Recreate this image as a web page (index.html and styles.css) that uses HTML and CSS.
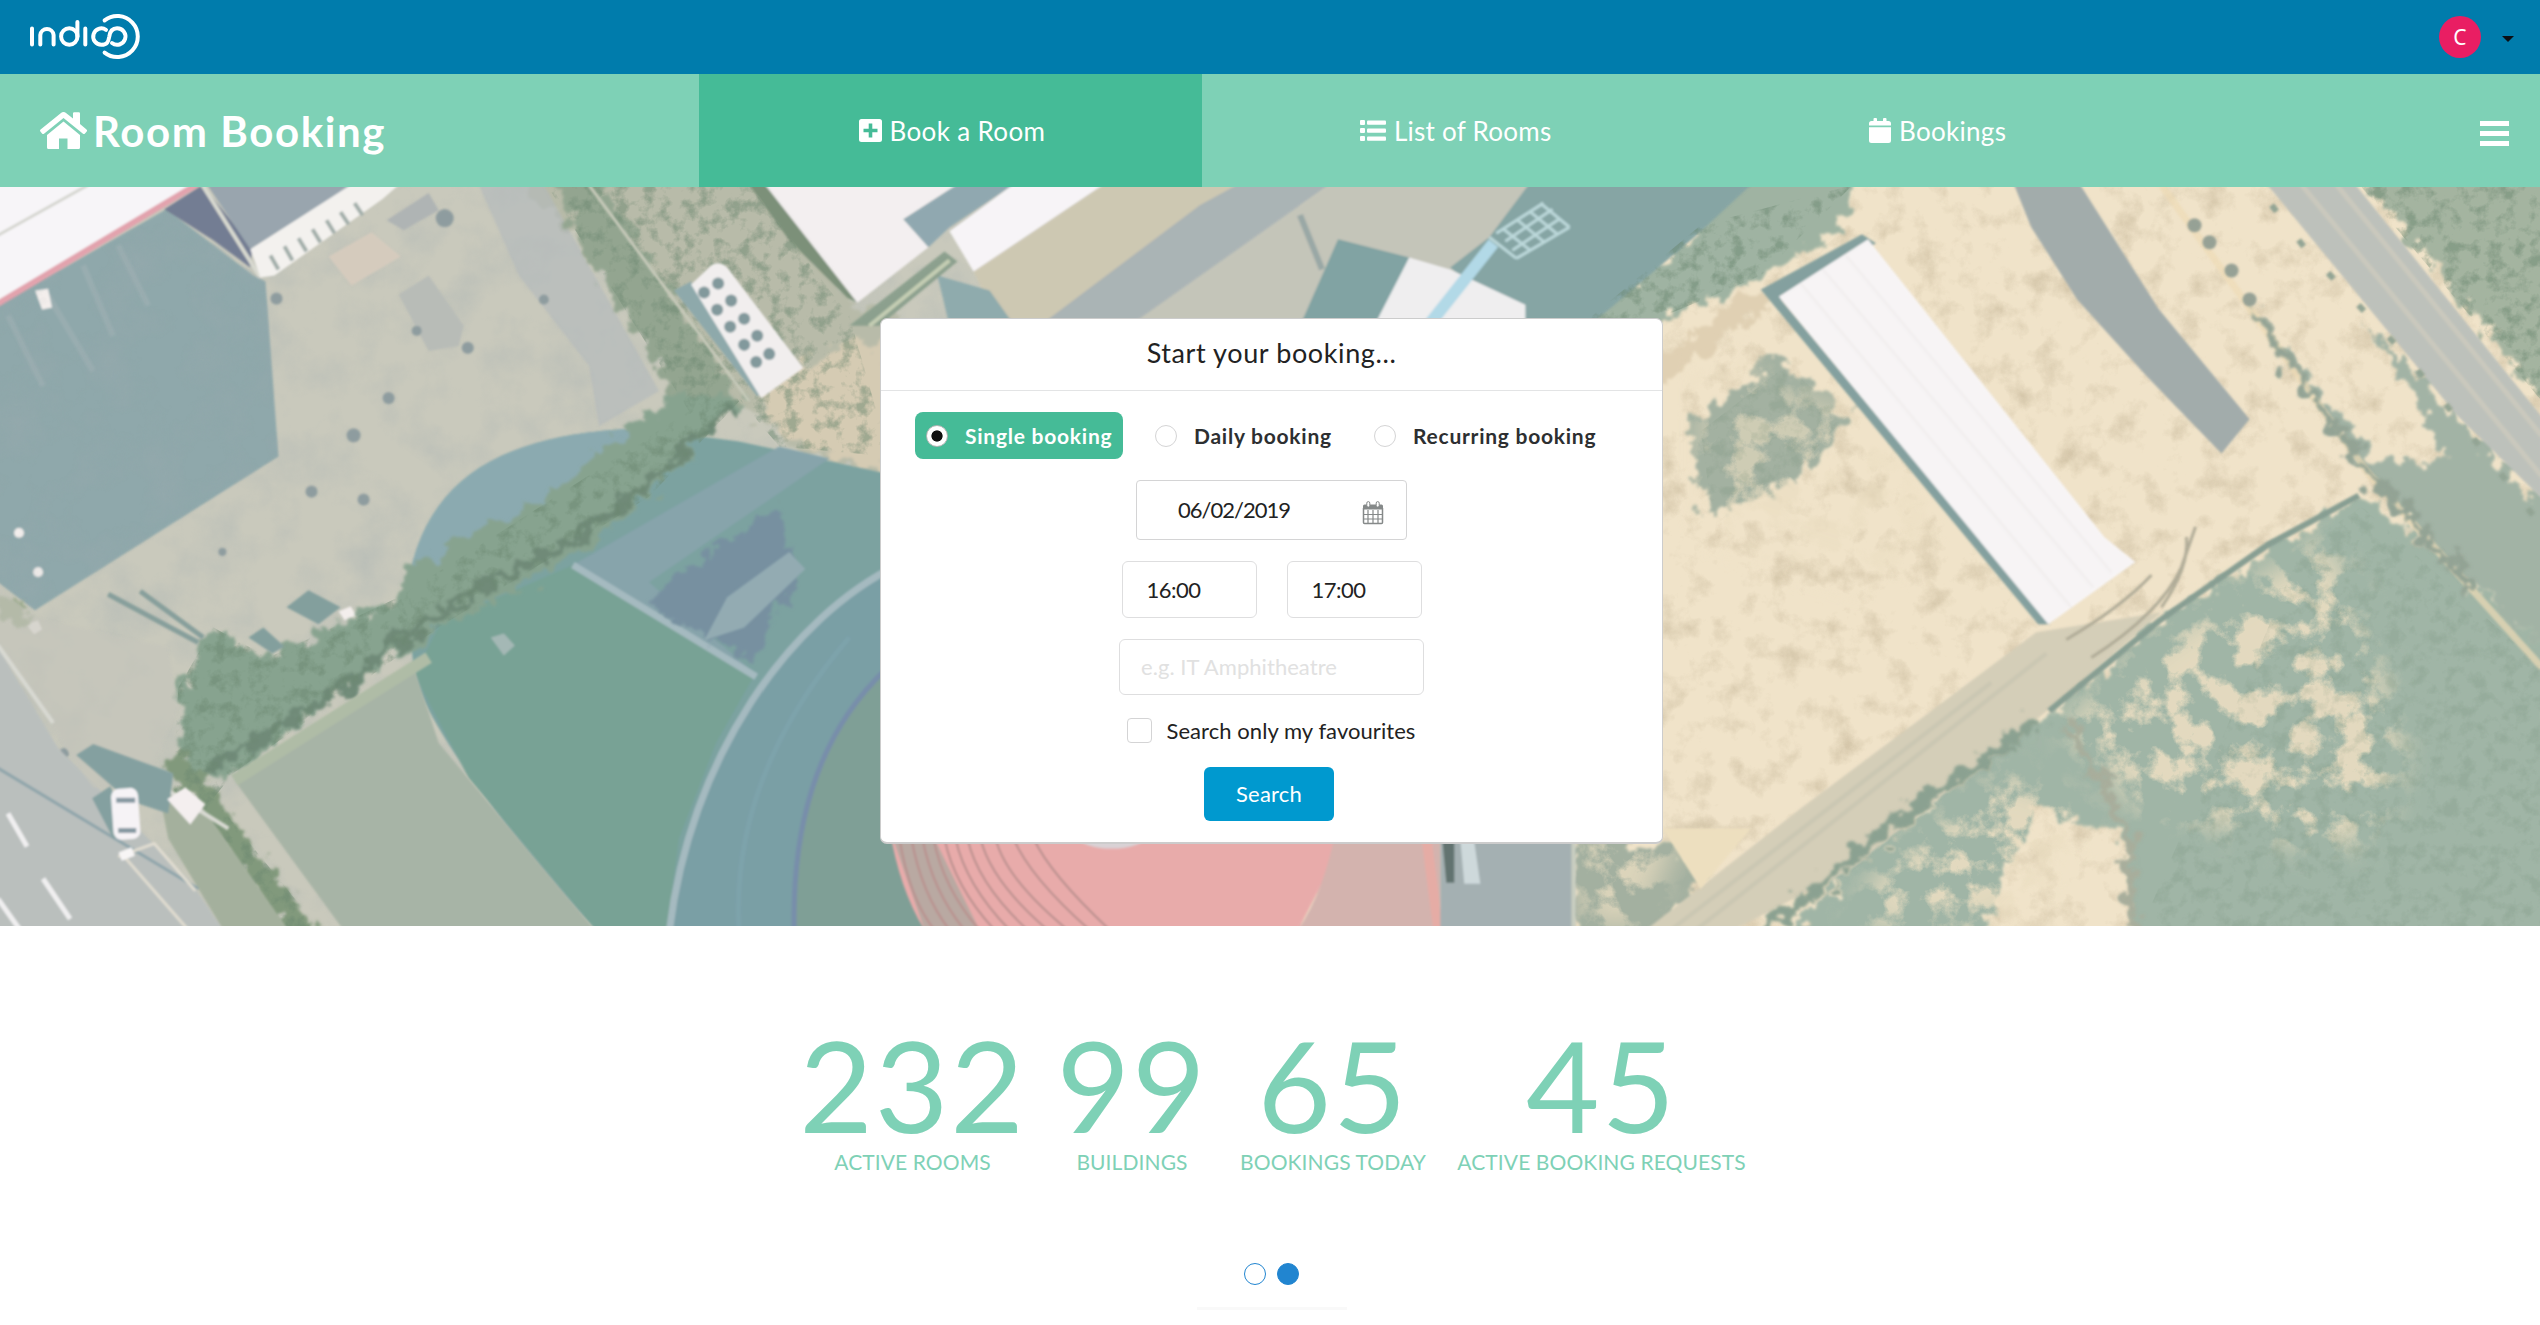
FILE: index.html
```html
<!DOCTYPE html>
<html lang="en">
<head>
<meta charset="utf-8">
<title>Indico - Room Booking</title>
<link rel="stylesheet" href="styles.css">
</head>
<body>
<header class="topbar">
  <svg class="logo" width="112" height="50" viewBox="28 12 112 50" fill="none" stroke="#fff" stroke-width="4" stroke-linecap="round">
    <path d="M32 28.5V44.6M40.3 44.6V35a6.7 6.7 0 0 1 13.3 0v9.6M77.4 22V36.5M85.3 28.5V44.6"/>
    <circle cx="69.3" cy="36.5" r="8.2"/>
    <path d="M106 29.8A8.2 8.2 0 1 0 101.5 44.8C107 44.8 108.4 42 109.3 36.5C110 31 112 28.2 117 28.2A8.3 8.3 0 1 1 112 43"/>
    <path d="M104.6 20.4A20.5 20.5 0 1 1 104.6 52.6"/>
  </svg>
  <div class="user"><span class="avatar">C</span><span class="caret"></span></div>
</header>
<nav class="nav">
  <a class="brand">
    <svg width="47" height="38" viewBox="0 0 47 38" fill="#fff"><path d="M23.5 9.5L7 23V35.5Q7 37 8.500 37H19V26.500H27.500V37H38.500Q40 37 40 35.500V23Z"/><path d="M23.500 0Q25 0 26 .9L33 6.500V1.500Q33 .3 34.200 .3H38.800Q40 .3 40 1.500V12L46.500 17.500Q47.500 18.500 46.700 19.500L45 21.500Q44 22.500 43 21.700L23.500 6L4 21.700Q3 22.500 2 21.500L.4 19.500Q-.4 18.500 .6 17.500L21 .9Q22 0 23.500 0Z"/></svg>
    <span class="brand-text">Room Booking</span>
  </a>
  <a class="tab active">
    <svg width="23" height="23" viewBox="0 0 23 23"><path fill="#fff" fill-rule="evenodd" d="M2.500 0H20.500Q23 0 23 2.500V20.500Q23 23 20.500 23H2.500Q0 23 0 20.500V2.500Q0 0 2.500 0ZM9.700 4.500V9.700H4.500V13.300H9.700V18.500H13.300V13.300H18.500V9.700H13.300V4.500Z"/></svg>
    <span class="t-book">Book a Room</span>
  </a>
  <a class="tab">
    <svg width="26" height="21" viewBox="0 0 26 21" fill="#fff"><rect width="5" height="5" rx="1"/><rect y="8" width="5" height="5" rx="1"/><rect y="16" width="5" height="5" rx="1"/><rect x="7" y=".4" width="19" height="4.300" rx="1"/><rect x="7" y="8.400" width="19" height="4.300" rx="1"/><rect x="7" y="16.400" width="19" height="4.300" rx="1"/></svg>
    <span class="t-list">List of Rooms</span>
  </a>
  <a class="tab last">
    <svg width="22" height="25" viewBox="0 0 22 25" fill="#fff"><path d="M4.500 3V1Q4.500 0 5.500 0H7Q8 0 8 1V3H14V1Q14 0 15 0H16.500Q17.500 0 17.500 1V3H19.500Q22 3 22 5.500V7.500H0V5.500Q0 3 2.500 3ZM0 9.200H22V22.500Q22 25 19.500 25H2.500Q0 25 0 22.500Z"/></svg>
    <span class="t-bookings">Bookings</span>
  </a>
  <a class="burger"><i></i><i></i><i></i></a>
</nav>
<main>
<section class="hero">
  <svg class="aerial" viewBox="2 2 2536 735" preserveAspectRatio="none">
    <defs>
      <filter id="rough" x="-5%" y="-5%" width="110%" height="110%"><feTurbulence type="fractalNoise" baseFrequency=".06" numOctaves="4" seed="4"/><feDisplacementMap in="SourceGraphic" scale="36" xChannelSelector="R" yChannelSelector="G"/><feGaussianBlur stdDeviation="1.800"/></filter>
      <filter id="soft"><feGaussianBlur stdDeviation="1"/></filter>
      <filter id="speckle" x="0" y="0" width="100%" height="100%" color-interpolation-filters="sRGB"><feTurbulence type="fractalNoise" baseFrequency=".035" numOctaves="6" seed="9"/><feColorMatrix values="0 0 0 0 .74  0 0 0 0 .68  0 0 0 0 .56  0 2.500 0 0 -1.250"/><feComposite in2="SourceGraphic" operator="in"/></filter>
      <filter id="leaves" x="0" y="0" width="100%" height="100%" color-interpolation-filters="sRGB"><feTurbulence type="fractalNoise" baseFrequency=".07" numOctaves="4" seed="2"/><feColorMatrix values="0 0 0 0 .42  0 0 0 0 .53  0 0 0 0 .44  3.500 0 0 0 -1.650"/><feComposite in2="SourceGraphic" operator="in"/></filter>
      <filter id="sand" x="-10%" y="-10%" width="120%" height="120%" color-interpolation-filters="sRGB"><feTurbulence type="fractalNoise" baseFrequency=".03" numOctaves="6" seed="15"/><feColorMatrix values="0 0 0 0 .92  0 0 0 0 .87  0 0 0 0 .76  6 0 0 0 -2.800" result="n"/><feGaussianBlur in="SourceGraphic" stdDeviation="16" result="m"/><feComposite in="n" in2="m" operator="in"/></filter>
      <filter id="grain" x="0" y="0" width="100%" height="100%" color-interpolation-filters="sRGB"><feTurbulence type="fractalNoise" baseFrequency=".02" numOctaves="6" seed="6"/><feColorMatrix values="0 0 0 0 .62  0 0 0 0 .67  0 0 0 0 .69  0 2 0 0 -.85"/><feComposite in2="SourceGraphic" operator="in"/></filter>
    </defs>
    <rect width="1300" height="739" fill="#c9c9bc"/>
    <rect x="1300" width="1240" height="739" fill="#f0e3c9"/>
    <rect width="1300" height="739" opacity=".3" filter="url(#grain)"/>
    <!-- open ground on the right -->
    <path d="M1500 0H2540V739H1500Z" opacity=".5" filter="url(#speckle)"/>
    <g filter="url(#rough)">
      <path d="M520 -10H760L860 125H900V300L790 260L740 215L640 130Z" fill="#b8bba9"/>
      <path d="M760 190L890 150V290L775 245Z" fill="#d5cbb3"/>
      <path d="M1740 -10H1856L1838 44L1762 92L1640 145L1575 140L1690 50Z" fill="#9fb3a2"/>
      <path d="M1772 171L1852 229L1795 296L1703 329L1690 238Z" fill="#a3b1a1"/>
      <path d="M2358 -10H2550V225Z" fill="#a4b4a0"/>
      <path d="M2254 123L2310 215L2400 330L2550 470V330L2440 215L2370 140L2450 280L2370 270Z" fill="#a2b3a5"/>
      <path d="M2360 308L2430 360L2550 470V750H2130L2125 650L2030 620L1980 750H1780L1850 680L2045 530L2150 440L2260 370Z" fill="#a0b5a6"/>
      <path d="M1575 640L1715 670L1655 750H1575Z" fill="#a3b0a0"/>
      <path d="M1640 190L1750 100L1770 118L1640 215Z" fill="#e0d0b3"/>
    </g>
    <path d="M2060 540L2160 450L2330 350L2370 460L2400 560L2380 640L2330 660L2140 620ZM1880 680L2010 580L2090 630L2000 739H1850Z" opacity=".9" filter="url(#sand)"/>
    <path d="M1700 170L1860 230L1930 330L1880 400L1700 340Z" opacity=".6" filter="url(#sand)"/>
    <path d="M1575 640H1680L1640 739H1585Z" opacity=".8" filter="url(#sand)"/>
    <g filter="url(#soft)">
      <path d="M2013 0H2079L2157 123L2248 233L2220 267L2145 190L2076 114L2030 42Z" fill="#a2acab"/>
      <path d="M2266 0H2354L2540 231V312L2455 229Z" fill="#bdc1bb"/>
      <path d="M2300 0L2540 290M2335 0L2540 250" fill="none" stroke="#cac9bd" stroke-width="5"/>
      <path d="M2160 0L2365 285L2450 380L2540 480" fill="none" stroke="#eedcb6" stroke-width="7" opacity=".7"/>
      <path d="M1640 745L1800 620L2035 445L2160 425L2047 522L1850 680L1725 745Z" fill="#d4ceb8"/>
      <path d="M1690 745L2045 466M1665 745L1990 495" fill="none" stroke="#cbc7b3" stroke-width="4"/>
    </g>
    <g filter="url(#rough)">
      <path d="M1760 745L1920 615L2040 532" fill="none" stroke="#8ba191" stroke-width="13"/>
      <path d="M2254 128L2300 195L2365 285L2470 400" fill="none" stroke="#93a394" stroke-width="9"/>
      <path d="M2065 535L2100 590L2128 650L2130 745" fill="none" stroke="#a8ad9b" stroke-width="9"/>
    </g>
    <g filter="url(#soft)">
      <path d="M2048 523L2157 434L2266 358L2357 309" fill="none" stroke="#879e93" stroke-width="6"/>
      <path d="M2065 452Q2120 420 2150 388M2090 470Q2160 425 2180 380L2194 340M2160 420Q2188 380 2185 350" fill="none" stroke="#b0ac98" stroke-width="3"/>
      <path d="M2270 20L2305 65L2400 165L2470 250L2540 340" fill="none" stroke="#93a494" stroke-width="6" stroke-dasharray="8 36"/>
      <g fill="#96a195"><circle cx="2193" cy="40" r="7"/><circle cx="2208" cy="57" r="7"/><circle cx="2230" cy="85" r="7"/><circle cx="2248" cy="114" r="7"/></g>
      <path d="M1760 104L1861 49L1875 58L1780 114L2049 437H2037Z" fill="#84a09f"/>
      <path d="M1778 111L1867 54L2103 350L2134 375L2047 437Z" fill="#f7f4f5"/>
      <path d="M1800 98L2070 420M1822 84L2092 400M1845 70L2110 385" stroke="#f1eeee" stroke-width="2"/>
    </g>
    <!-- yards and roofs along the upper edge -->
    <g filter="url(#soft)">
      <path d="M1103 0H1240L1045 140H1000L974 86Z" fill="#cdc8b2"/>
      <path d="M1200 20L1237 0H1329L1130 140H1040Z" fill="#aab4b5"/>
      <path d="M1329 0H1540L1500 60L1420 140H1130Z" fill="#c4c5b9"/>
      <path d="M1300 30L1322 84" stroke="#9aa8a6" stroke-width="6"/>
      <path d="M1528 0H1750L1696 50L1589 140H1520L1450 82L1489 52Z" fill="#86a5a4"/>
      <path d="M1338 54L1409 72L1378 140H1300Z" fill="#81a3a3"/>
      <path d="M1409 72L1450 84L1525 119V140H1374Z" fill="#efeeef"/>
      <path d="M1493 58L1428 140" stroke="#b2d9e7" stroke-width="12"/>
      <path d="M1496 48L1543 18M1505 56L1552 24M1512 65L1560 33M1516 73L1569 42M1489 52L1516 73M1502 43L1530 65M1516 34L1544 57M1529 26L1557 49M1540 18L1569 42" stroke="#bcd8da" stroke-width="3"/>
      <path d="M938 90L990 105L1015 140H950Z" fill="#8fabad"/>
      <path d="M850 140L945 66L958 76L880 140Z" fill="#8ca08e"/>
      <path d="M870 140L950 75" stroke="#c5ceb4" stroke-width="4"/>
      <path d="M750 0H768L858 117L848 112L790 55Z" fill="#7c9079"/>
      <path d="M766 0H957L904 34L929 62L858 117Z" fill="#f3eff0"/>
      <path d="M957 0H1013L950 42L929 62L904 34Z" fill="#90a8b0"/>
      <path d="M1013 0H1103L974 86L950 46Z" fill="#f7f4f7"/>
    </g>
    <!-- north-west court -->
    <g filter="url(#soft)">
      <path d="M0 120L168 24L255 90L267 96L280 270L37 423L0 395Z" fill="#8fa8ab"/>
      <path d="M10 130L45 200M50 110L95 185M85 80L115 150M120 60L150 120" stroke="#99adb0" stroke-width="6"/>
      <path d="M166 24L204 0L254 62L252 82L215 55Z" fill="#737d93"/>
      <path d="M209 0H355L252 64Z" fill="#99a5ae"/>
      <path d="M0 0H197L0 117Z" fill="#f7f5f8"/>
      <path d="M199 -1L0 118" stroke="#e2a3ad" stroke-width="6"/>
      <path d="M90 0L0 50" stroke="#d5d6d0" stroke-width="3"/>
      <path d="M204 0L262 92" stroke="#d8d9d0" stroke-width="4"/>
      <path d="M252 64L352 0H400L384 14L276 90L262 92Z" fill="#f3f1ee"/>
      <path d="M272 70L280 84M286 61L294 75M300 53L308 66M314 44L322 57M328 35L336 48M342 27L350 39M356 18L364 30" stroke="#a3afaa" stroke-width="4"/>
      <path d="M330 71L373 47L402 71L353 100Z" fill="#d5cbbd"/>
      <path d="M388 35L430 8L440 25L405 45Z" fill="#afb4b4"/>
      <path d="M400 109L430 90L465 140L460 160L430 165Z" fill="#b8bcb7"/>
      <path d="M480 0H545L660 205L600 240L590 180L520 90Z" fill="#b2b9bc" opacity=".6"/>
      <g fill="#8e9c9f"><circle cx="446" cy="33" r="9"/><circle cx="278" cy="113" r="6"/><circle cx="545" cy="114" r="5"/><circle cx="418" cy="145" r="5"/><circle cx="469" cy="162" r="6"/><circle cx="390" cy="212" r="6"/><circle cx="355" cy="249" r="7"/><circle cx="313" cy="305" r="6"/><circle cx="365" cy="313" r="6"/><circle cx="224" cy="365" r="4"/><circle cx="66" cy="565" r="5"/><circle cx="87" cy="716" r="6"/></g>
      <g fill="#f3eeec"><circle cx="21" cy="346" r="5"/><circle cx="40" cy="385" r="5"/><path d="M28 437L40 433L44 442L36 447ZM37 105L50 103L54 122L44 124ZM340 424L352 419L358 428L346 433Z"/></g>
    </g>
    <path d="M0 120L168 24L267 96L280 270L37 423L0 395Z" opacity=".35" filter="url(#grain)"/>
    <!-- athletics track and playing field -->
    <g filter="url(#soft)">
      <path d="M407 412C420 300 490 248 640 242L740 255L900 290V739H595C500 640 420 520 416 487Z" fill="#7ba2a0"/>
      <path d="M407 412C420 300 490 248 640 242L700 230L560 330Z" fill="#8baab0"/>
      <path d="M442 435L574 378L755 488L717 555L680 650L668 739H595L470 590L416 487Z" fill="#78a295"/>
      <path d="M574 378L780 260L830 272L650 395L755 485Z" fill="#87a4ab"/>
      <path d="M900 377C790 430 690 580 668 739H910V377Z" fill="#7a9fa5"/>
      <path d="M900 470Q790 560 795 745H1000V600Z" fill="#7f9f96"/>
      <path d="M900 470Q790 560 795 745" fill="none" stroke="#788eaa" stroke-width="5"/>
      <path d="M740 745Q730 590 850 450" fill="none" stroke="#7da3ab" stroke-width="5"/>
      <path d="M574 378L757 489M900 377C790 430 690 570 670 745" fill="none" stroke="#a5bac0" stroke-width="7"/>
      <path d="M492 450L505 446L516 458L505 468Z" fill="#a4b8b5"/>
    </g>
    <g filter="url(#rough)">
      <path d="M645 412L780 320L800 390L752 472Z" fill="#7790a0"/>
      <path d="M548 -5L600 -5L740 215L690 225L610 110Z" fill="#93a590"/>
      <path d="M680 205L745 215L650 310L560 380L440 440L345 505L235 585L180 600L185 560L180 500L215 440L270 470L400 410L410 380L530 320Z" fill="#87a38f"/>
      <path d="M735 220L640 305L560 360L440 425L330 510L190 595" fill="none" stroke="#6f8a78" stroke-width="10"/>
      <path d="M175 570L225 640L310 750" fill="none" stroke="#81997c" stroke-width="26"/>
      <path d="M0 400L38 430L20 440L0 430Z" fill="#9aa98c"/>
    </g>
    <path d="M548 0H600L740 215L650 310L440 440L235 585L215 610L320 739H270L175 600L180 500L215 440L270 470L400 410L690 225ZM560 0H750L850 130L890 270L780 260ZM1700 40L1852 0L1760 90L1640 140H1580ZM2358 0H2540V215Z" opacity=".5" filter="url(#leaves)"/>
    <path d="M1785 180L1845 230L1790 290L1710 315L1700 245ZM2300 360L2360 320L2540 480V739H2140L2200 600Z" opacity=".18" filter="url(#leaves)"/>
    <g filter="url(#soft)">
      <path d="M705 453L728 410L790 365L806 382L745 440Z" fill="#93abb2"/>
      <path d="M236 592L416 482L440 555L596 741H345Z" fill="#a7b4a6"/>
      <path d="M236 592L430 470" stroke="#afbca6" stroke-width="12"/>
      <path d="M160 600L205 620L290 741H225L170 650Z" fill="#a4b09d"/>
      <path d="M0 460L60 560L190 690L225 741H0Z" fill="#babfbd"/>
      <path d="M0 400L0 460L95 600L150 590L180 520L170 460L37 430Z" fill="#c4c5bb" opacity=".6"/>
      <path d="M0 458L55 535M150 590L230 640" stroke="#d8d9d2" stroke-width="4"/>
      <path d="M0 580L200 700" stroke="#8fa5ab" stroke-width="3"/>
      <path d="M10 625L29 658M45 690L72 730M0 710L22 741" stroke="#f0eff0" stroke-width="5"/>
      <path d="M78 567L95 556L175 585L170 625L130 612Z" fill="#84a0a0"/>
      <path d="M94 610L112 598L135 645L115 650Z" fill="#84a0a0"/>
      <rect x="114" y="600" width="27" height="51" rx="8" fill="#f6f3f6" transform="rotate(-4 127 625)"/>
      <path d="M118 612H137M120 642H138" stroke="#8799a2" stroke-width="5"/>
      <path d="M169 611L187 599L207 616L192 636Z" fill="#f4efef"/>
      <path d="M120 668L156 655L197 702M126 668L190 741" fill="none" stroke="#e0dcd0" stroke-width="3"/>
      <path d="M122 668L135 663" stroke="#f7f5f5" stroke-width="9"/>
      <path d="M288 420L310 403L342 420L320 437ZM250 450L265 440L286 459L274 466Z" fill="#839f9d"/>
      <path d="M142 404L205 450M110 407L200 455" stroke="#879f9b" stroke-width="5"/>
      <path d="M675 105L692 96L770 205L758 210Z" fill="#8ea9ab"/>
      <path d="M692 99L712 80Q720 75 728 82L804 182L790 192L762 212Z" fill="#f1eeee"/>
      <g fill="#82999c"><circle cx="705" cy="107" r="6"/><circle cx="719" cy="98" r="6"/><circle cx="718" cy="124" r="6"/><circle cx="732" cy="115" r="6"/><circle cx="731" cy="141" r="6"/><circle cx="745" cy="133" r="6"/><circle cx="745" cy="159" r="6"/><circle cx="758" cy="150" r="6"/><circle cx="757" cy="176" r="6"/><circle cx="770" cy="168" r="6"/></g>
      <path d="M590 0L750 215" stroke="#c6c9b9" stroke-width="3"/>
    </g>
    <!-- red infield beneath the card -->
    <g filter="url(#soft)">
      <path d="M890 640H1350L1298 741H925Q900 700 890 640Z" fill="#e8abaa"/>
      <path d="M890 640H930L980 741H925Z" fill="#b9a9a2"/>
      <path d="M1336 640H1440V741H1298Q1325 700 1336 640Z" fill="#d3b3ae"/>
      <path d="M1425 640L1438 741" stroke="#e5aca5" stroke-width="10"/>
      <path d="M900 650Q910 710 935 741M912 650Q922 705 950 741M923 650Q933 702 965 741M934 650Q944 700 980 741M945 650Q955 698 995 741M956 650Q966 696 1010 741M968 650Q978 695 1028 741M981 650Q991 692 1048 741M996 650Q1006 690 1068 741M1014 650Q1030 688 1090 741M1034 650Q1050 685 1110 741" fill="none" stroke="#b9908e" stroke-width="2"/>
      <ellipse cx="1112" cy="648" rx="34" ry="12" fill="#d9d2d5"/>
      <path d="M1440 640H1575V741H1440Z" fill="#a4b0b2"/>
      <path d="M1441 640H1454V694H1446Z" fill="#62736f"/>
      <path d="M1459 640H1472L1480 695H1464Z" fill="#ced9db"/>
      <path d="M1573 640V741" stroke="#c9cec0" stroke-width="4"/>
      <path d="M1662 640H1750L1700 700Z" fill="#eddfbf"/>
    </g>
  </svg>
  <form class="card">
    <h2 class="card-head"><span class="t-title">Start your booking...</span></h2>
    <div class="card-body">
      <div class="radios">
        <label class="opt on"><i class="radio"></i><span>Single booking</span></label>
        <label class="opt daily"><i class="radio"></i><span>Daily booking</span></label>
        <label class="opt rec"><i class="radio"></i><span>Recurring booking</span></label>
      </div>
      <div class="box date"><span>06/02/2019</span>
        <svg width="22" height="24" viewBox="0 0 22 24"><path d="M1.500 7V21.500Q1.500 22.500 2.500 22.500H19.500Q20.500 22.500 20.500 21.500V7" fill="none" stroke="#858989" stroke-width="1.500"/><path d="M1 8.500V5Q1 3.500 2.500 3.500H19.500Q21 3.500 21 5V8.500Z" fill="#858989"/><path d="M6 9V22M11 9V22M16 9V22M2 13.500H20M2 18H20" stroke="#858989" stroke-width="1.200"/><rect x="4.800" y=".6" width="3" height="5.500" rx="1.500" fill="#fff" stroke="#858989"/><rect x="14.200" y=".6" width="3" height="5.500" rx="1.500" fill="#fff" stroke="#858989"/></svg>
      </div>
      <div class="times"><div class="box time">16:00</div><div class="box time">17:00</div></div>
      <div class="box room"><span>e.g. IT Amphitheatre</span></div>
      <label class="fav"><i class="check"></i><span>Search only my favourites</span></label>
      <div class="search"><span>Search</span></div>
    </div>
  </form>
</section>
<section class="stats">
  <div class="stat"><b>232</b><span>ACTIVE ROOMS</span></div>
  <div class="stat"><b>99</b><span>BUILDINGS</span></div>
  <div class="stat"><b>65</b><span>BOOKINGS TODAY</span></div>
  <div class="stat"><b>45</b><span>ACTIVE BOOKING REQUESTS</span></div>
</section>
<div class="pager"><i></i><i class="current"></i></div>
<div class="rule"></div>
</main>
</body>
</html>
```
FILE: styles.css
```css
* { box-sizing: border-box; }
body { margin: 0; background: #fff; color: #222; font: 22px/28px Lato, "Open Sans", sans-serif; overflow: hidden; }
main, section, svg { display: block; }
i { font-style: normal; }
span { white-space: nowrap; }

.topbar { height: 74px; background: #007cac; display: flex; justify-content: space-between; padding: 12px 26px 0 28px; }
.user { display: flex; gap: 21px; align-items: center; height: 50px; }
.avatar { width: 42px; height: 42px; border-radius: 50%; background: #e91e63; color: #fff; font: 21px/42px "Noto Sans", sans-serif; text-align: center; }
.caret { border: 6px solid transparent; border-top: 6px solid #0b0f14; border-bottom: 0; margin-top: 3px; }

.nav { height: 113px; background: #7ed1b6; display: grid; grid-template-columns: 699px 503px 502px 503px 1fr; color: #fff; font-size: 26px; }
.nav a { display: flex; align-items: center; }
.brand { padding-left: 40px; gap: 6px; }
.brand-text { font-size: 42px; font-weight: 700; letter-spacing: 1.600px; line-height: 50px; }
.tab { justify-content: center; gap: 8px; padding-left: 3px; }
.tab.last { padding: 0 36px 0 0; }
.active { background: #45bb97; }
.t-book { width: 156px; letter-spacing: .350px; }
.t-list { width: 155px; letter-spacing: .250px; }
.t-bookings { width: 107px; letter-spacing: .300px; }
.nav .burger { flex-direction: column; align-items: flex-end; gap: 5.500px; padding: 47px 31px 0 0; }
.burger i { width: 29px; height: 4.500px; background: #fff; }

.hero { height: 739px; position: relative; padding-top: 131px; }
.aerial { position: absolute; inset: 0; width: 100%; height: 739px; }
.card { position: relative; width: 783px; height: 526px; margin: 0 auto 0 880px; background: #fff; border: 1px solid #ccc; border-bottom-width: 2px; border-radius: 7px; }
.card-head { margin: 0; height: 72px; border-bottom: 1px solid #e3e4e5; font-size: 27px; font-weight: 400; line-height: 67px; text-align: center; letter-spacing: .600px; }
.card-body { display: flex; flex-direction: column; align-items: center; padding-top: 21px; }
.radios { align-self: stretch; display: flex; padding-left: 34px; height: 47px; font-weight: 700; font-size: 21px; letter-spacing: .750px; color: #2d2f31; }
.opt { display: flex; align-items: center; gap: 17px; padding-left: 11px; }
.opt.on { width: 208px; background: #45bb97; color: #fff; border-radius: 8px; }
.opt.daily { width: 219px; margin-left: 21px; }
.radio { width: 22px; height: 22px; border: 1px solid #d4d4d5; border-radius: 50%; background: #fff; }
.on .radio { border-color: #b5b5b5; background: radial-gradient(circle, #111 5.200px, #fff 6px); }
.box { border: 1px solid #dededf; border-radius: 6px; background: #fff; display: flex; align-items: center; }
.date { width: 271px; height: 60px; margin-top: 21px; padding: 0 22px 0 41px; justify-content: space-between; border-radius: 4px; border-color: #d4d4d5; letter-spacing: -1px; }
.date svg { margin-top: 5px; }
.times { display: flex; gap: 30px; margin-top: 21px; }
.time { width: 135px; height: 57px; padding-left: 24px; letter-spacing: -.500px; }
.room { width: 305px; height: 56px; margin-top: 21px; padding-left: 21px; color: #e1e1e1; letter-spacing: .050px; }
.fav { width: 290px; height: 25px; margin-top: 23px; display: flex; align-items: center; gap: 15px; letter-spacing: .060px; }
.check { width: 25px; height: 25px; border: 1px solid #d4d4d5; border-radius: 4px; }
.search { width: 130px; height: 54px; margin: 24px 5px 0 0; border-radius: 6px; background: #0099cf; color: #fff; text-align: center; line-height: 54px; letter-spacing: .200px; }

.stats { height: 337px; padding: 102px 0 0 799px; display: grid; grid-template-columns: 227px 151px 184px 289px; column-gap: 32px; align-content: start; color: #7ed1b6; font-size: 21px; }
.stat { display: flex; flex-direction: column; align-items: center; }
.stat b { font-weight: 400; font-size: 127px; line-height: 112px; letter-spacing: 1.800px; }
.stat span { line-height: 26px; margin-top: 9px; letter-spacing: .100px; }
.stat:nth-child(2) { margin-left: -3px; }
.pager { display: flex; justify-content: center; gap: 11px; height: 22px; padding-left: 3px; }
.pager i { width: 22px; height: 22px; border: 1px solid #2185d0; border-radius: 50%; }
.pager .current { background: #2185d0; }
.rule { width: 150px; height: 3px; margin: 22px auto 0 1197px; background: #f9f9f9; }
```
